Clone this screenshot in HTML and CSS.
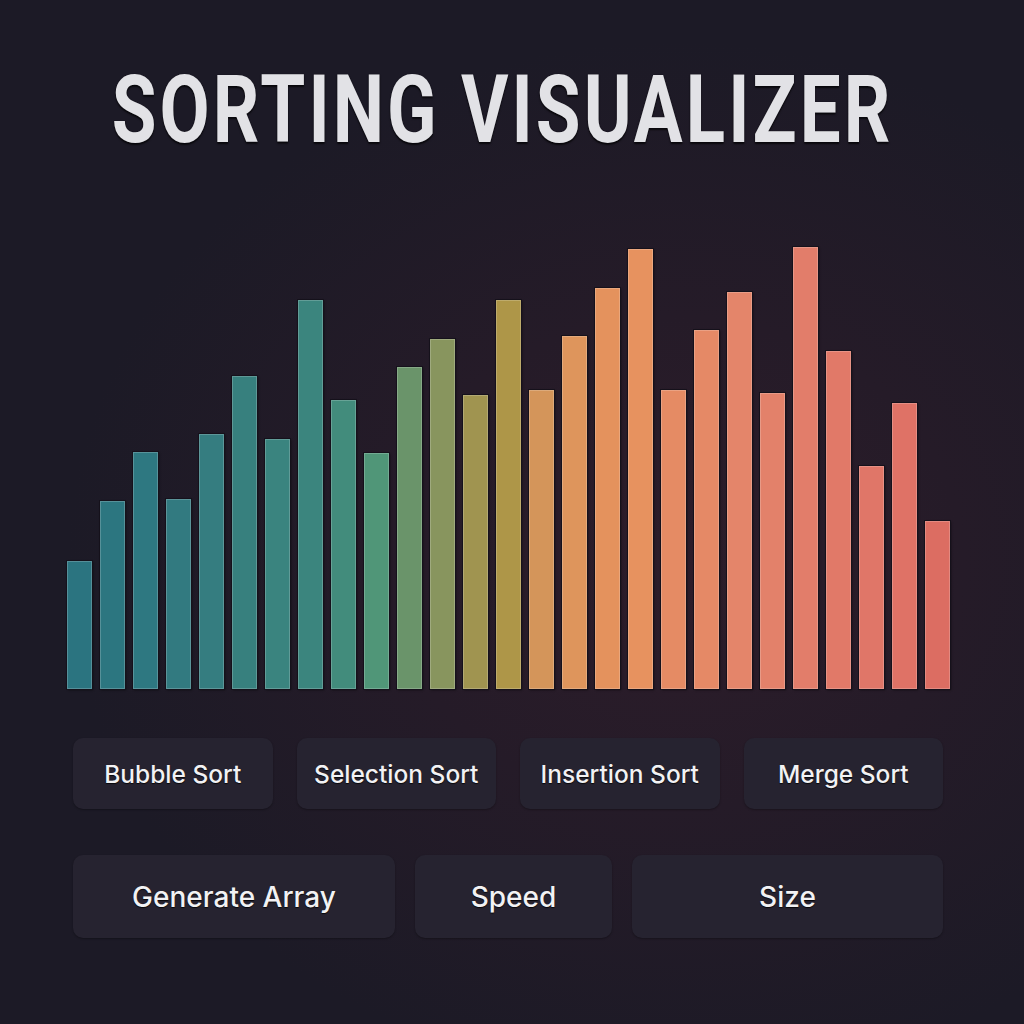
FILE: index.html
```html
<!DOCTYPE html>
<html lang="en">
<head>
<meta charset="utf-8">
<title>Sorting Visualizer</title>
<link rel="stylesheet" href="styles.css">
</head>
<body>
<main class="app">
  <header class="head"><h1 class="title">SORTING VISUALIZER</h1></header>
  <section class="chart">
    <div class="bar" style="height:128px;background:#2b7480"></div>
    <div class="bar" style="height:188px;background:#2c7680"></div>
    <div class="bar" style="height:237px;background:#2e7881"></div>
    <div class="bar" style="height:190px;background:#327a80"></div>
    <div class="bar" style="height:255px;background:#357d80"></div>
    <div class="bar" style="height:313px;background:#37807e"></div>
    <div class="bar" style="height:250px;background:#3a847f"></div>
    <div class="bar" style="height:389px;background:#3b857e"></div>
    <div class="bar" style="height:289px;background:#428c7c"></div>
    <div class="bar" style="height:236px;background:#509678"></div>
    <div class="bar" style="height:322px;background:#6a946a"></div>
    <div class="bar" style="height:350px;background:#88955e"></div>
    <div class="bar" style="height:294px;background:#a09450"></div>
    <div class="bar" style="height:389px;background:#ae9648"></div>
    <div class="bar" style="height:299px;background:#d4955a"></div>
    <div class="bar" style="height:353px;background:#de955c"></div>
    <div class="bar" style="height:401px;background:#e4925d"></div>
    <div class="bar" style="height:440px;background:#e7925f"></div>
    <div class="bar" style="height:299px;background:#e58b64"></div>
    <div class="bar" style="height:359px;background:#e58966"></div>
    <div class="bar" style="height:397px;background:#e4856a"></div>
    <div class="bar" style="height:296px;background:#e3816a"></div>
    <div class="bar" style="height:442px;background:#e27d6a"></div>
    <div class="bar" style="height:338px;background:#e17968"></div>
    <div class="bar" style="height:223px;background:#e07668"></div>
    <div class="bar" style="height:286px;background:#df7266"></div>
    <div class="bar" style="height:168px;background:#dc6d62"></div>
  </section>
  <section class="algos">
    <button class="btn">Bubble Sort</button>
    <button class="btn">Selection Sort</button>
    <button class="btn">Insertion Sort</button>
    <button class="btn">Merge Sort</button>
  </section>
  <section class="controls">
    <button class="btn btn-lg">Generate Array</button>
    <button class="btn btn-lg">Speed</button>
    <button class="btn btn-lg">Size</button>
  </section>
</main>
</body>
</html>
```
FILE: styles.css
```css
* { box-sizing: border-box; }
html, body {
  margin: 0;
  height: 100%;
}
body {
  background: radial-gradient(ellipse 70% 60% at 66% 55%, #2d1d2a 0%, #251b28 40%, #1c1a26 85%);
  background-color: #1c1a26;
  font-family: Inter, "Noto Sans", sans-serif;
  overflow: hidden;
}
.app {
  width: 1024px;
  height: 1024px;
  padding: 0 0 0 67px;
  display: flex;
  flex-direction: column;
}
.head {
  margin: 60px 0 0 -67px;
  width: 1006px;
  height: 100px;
  display: flex;
  justify-content: center;
}
.title {
  margin: 0;
  white-space: nowrap;
  font-family: Roboto, "Liberation Sans", sans-serif;
  font-weight: bold;
  font-size: 94px;
  line-height: 100px;
  letter-spacing: 4px;
  color: #e2e2e6;
  transform: scaleX(0.773);
  text-shadow: 0 0 1px #0b0a10, 0 2px 2px rgba(0,0,0,0.7);
}
.chart {
  margin-top: 79px;
  height: 450px;
  width: 883px;
  display: flex;
  align-items: flex-end;
  gap: 8px;
}
.bar {
  width: 25px;
  flex: 0 0 25px;
  box-shadow: inset 0 0 0 1px rgba(255,255,255,0.2), 0 0 0 1px #15111b, 1px 1px 2px rgba(0,0,0,0.6);
}
.algos {
  margin: 49px 0 0 6px;
  width: 870px;
  display: grid;
  grid-template-columns: repeat(4, 1fr);
  gap: 24px;
}
.controls {
  margin: 46px 0 0 6px;
  width: 870px;
  display: grid;
  grid-template-columns: 322px 197px 1fr;
  gap: 20px;
}
.btn {
  height: 71px;
  border: none;
  border-radius: 10px;
  background: #262330;
  color: #f2f2f4;
  font-family: Inter, "Noto Sans", sans-serif;
  font-size: 24.5px;
  font-weight: 500;
  text-shadow: 0 1px 1px rgba(0,0,0,0.8);
  box-shadow: 0 1px 2px rgba(0,0,0,0.3);
  padding: 0;
}
.btn-lg {
  height: 83px;
  font-size: 28px;
}
```
